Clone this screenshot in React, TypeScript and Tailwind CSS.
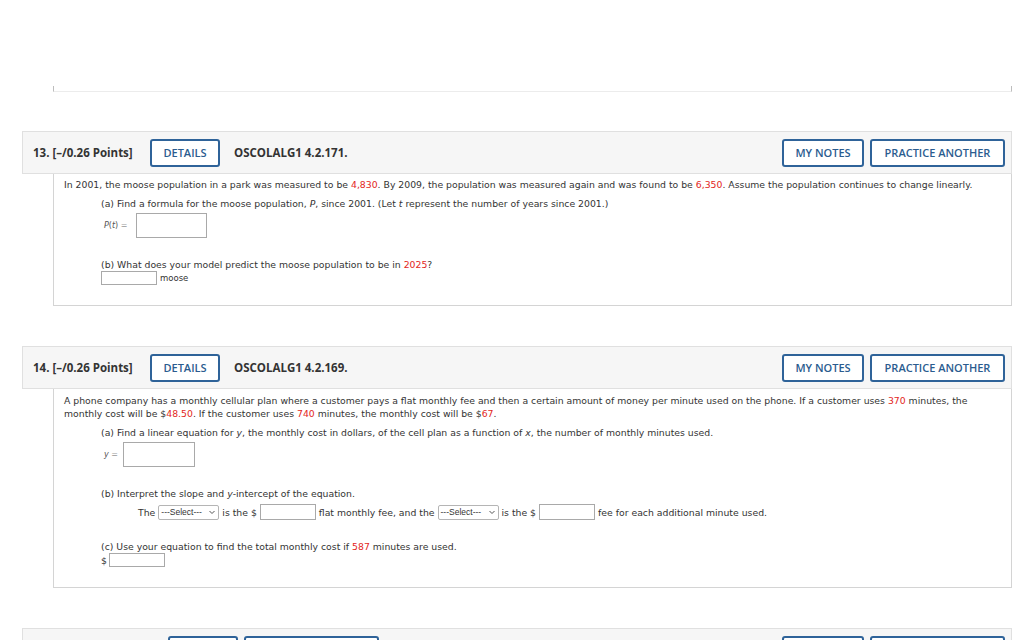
import React from "react";

const Btn = ({ children, className = "" }: { children?: React.ReactNode; className?: string }) => (
  <div
    className={`flex h-[28px] items-center justify-center rounded-[3px] border-2 border-[#2f6399] bg-white text-[11px] font-semibold text-[#2b5c8f] ${className}`}
  >
    {children}
  </div>
);

const Red = ({ children }: { children: React.ReactNode }) => <span className="text-[#e3261c]">{children}</span>;

const Box = ({ className = "" }: { className?: string }) => (
  <div className={`border border-[#a9a9a9] bg-white ${className}`} />
);

const Select = () => (
  <div className="flex h-[15px] w-[61px] items-center justify-between rounded-[2px] border border-[#b5b5b5] bg-white pl-[2px] pr-[2px] font-['Liberation_Sans',sans-serif] text-[8.5px] text-[#333]">
    <span>---Select---</span>
    <svg width="8" height="8" viewBox="0 0 8 8" fill="none" stroke="#555" strokeWidth="1">
      <path d="M1.5 3 L4 5.5 L6.5 3" />
    </svg>
  </div>
);

const Header = ({ label, code }: { label?: string; code?: string }) => (
  <div className="flex h-[43px] items-center border border-[#e0e0e0] bg-[#f6f6f6] pl-[10px] pr-[6px] font-['Open_Sans',sans-serif]">
    <span className="w-[117px] text-[11.5px] font-bold text-[#333]">{label}</span>
    <Btn className="w-[70px]">DETAILS</Btn>
    <span className="ml-[14px] text-[11.5px] font-bold text-[#333]">{code}</span>
    <div className="ml-auto flex gap-[6px]">
      <Btn className="w-[82px]">MY NOTES</Btn>
      <Btn className="w-[135px]">PRACTICE ANOTHER</Btn>
    </div>
  </div>
);

export default function App() {
  return (
    <div className="min-h-[640px] bg-white font-['DejaVu_Sans',sans-serif] text-[9.3px] leading-[13px] text-[#333]">
      <div className="ml-[22px] w-[990px] pt-[86px]">
        <div className="ml-[31px] h-[6px] border-x border-b border-x-[#bdbdbd] border-b-[#ececec]" />

        {/* question 13 */}
        <div className="mt-[39px]">
          <Header label="13. [–/0.26 Points]" code="OSCOLALG1 4.2.171." />
          <div className="ml-[31px] border-x border-b border-[#d4d4d4] px-[10px] pb-[20px] pt-[4px]">
            <p>
              In 2001, the moose population in a park was measured to be <Red>4,830</Red>. By 2009, the population was
              measured again and was found to be <Red>6,350</Red>. Assume the population continues to change linearly.
            </p>
            <div className="ml-[37px]">
              <p className="mt-[6px]">
                (a) Find a formula for the moose population, <i>P</i>, since 2001. (Let <i>t</i> represent the number of
                years since 2001.)
              </p>
              <div className="mt-[3px] flex items-center">
                <span className="ml-[3px] w-[32px] text-[8px] text-[#555]">
                  <i>P</i>(<i>t</i>) <span className="text-[#999]">=</span>
                </span>
                <Box className="h-[25px] w-[71px]" />
              </div>
              <p className="mt-[20px]">
                (b) What does your model predict the moose population to be in <Red>2025</Red>?
              </p>
              <div className="flex items-center gap-[3px]">
                <Box className="h-[14px] w-[56px]" />
                <span className="text-[8.5px]">moose</span>
              </div>
            </div>
          </div>
        </div>

        {/* question 14 */}
        <div className="mt-[40px]">
          <Header label="14. [–/0.26 Points]" code="OSCOLALG1 4.2.169." />
          <div className="ml-[31px] border-x border-b border-[#d4d4d4] px-[10px] pb-[20px] pt-[5px]">
            <p>
              A phone company has a monthly cellular plan where a customer pays a flat monthly fee and then a certain
              amount of money per minute used on the phone. If a customer uses <Red>370</Red> minutes, the
              <br />
              monthly cost will be $<Red>48.50</Red>. If the customer uses <Red>740</Red> minutes, the monthly cost will
              be $<Red>67</Red>.
            </p>
            <div className="ml-[37px]">
              <p className="mt-[6px]">
                (a) Find a linear equation for <i>y</i>, the monthly cost in dollars, of the cell plan as a function of{" "}
                <i>x</i>, the number of monthly minutes used.
              </p>
              <div className="mt-[3px] flex items-center">
                <span className="ml-[3px] w-[19px] text-[8px] text-[#555]">
                  <i>y</i> <span className="text-[#999]">=</span>
                </span>
                <Box className="h-[25px] w-[72px]" />
              </div>
              <p className="mt-[20px]">
                (b) Interpret the slope and <i>y</i>-intercept of the equation.
              </p>
              <div className="ml-[37px] mt-[4px] flex items-center gap-[3px]">
                <span>The</span>
                <Select />
                <span>is the $</span>
                <Box className="h-[16px] w-[56px]" />
                <span>flat monthly fee, and the</span>
                <Select />
                <span>is the $</span>
                <Box className="h-[16px] w-[56px]" />
                <span>fee for each additional minute used.</span>
              </div>
              <p className="mt-[20px]">
                (c) Use your equation to find the total monthly cost if <Red>587</Red> minutes are used.
              </p>
              <div className="flex items-center gap-[2px]">
                <span>$</span>
                <Box className="h-[14px] w-[56px]" />
              </div>
            </div>
          </div>
        </div>

        {/* question 15, only its top edge is in view */}
        <div className="mt-[40px]">
          <div className="flex h-[43px] items-center border border-[#e0e0e0] bg-[#f6f6f6] pl-[145px] pr-[6px]">
            <Btn className="w-[70px]" />
            <Btn className="ml-[6px] w-[135px]" />
            <div className="ml-auto flex gap-[6px]">
              <Btn className="w-[82px]" />
              <Btn className="w-[135px]" />
            </div>
          </div>
          <div className="ml-[31px] h-[80px] border-x border-b border-[#d4d4d4]" />
        </div>
      </div>
    </div>
  );
}
